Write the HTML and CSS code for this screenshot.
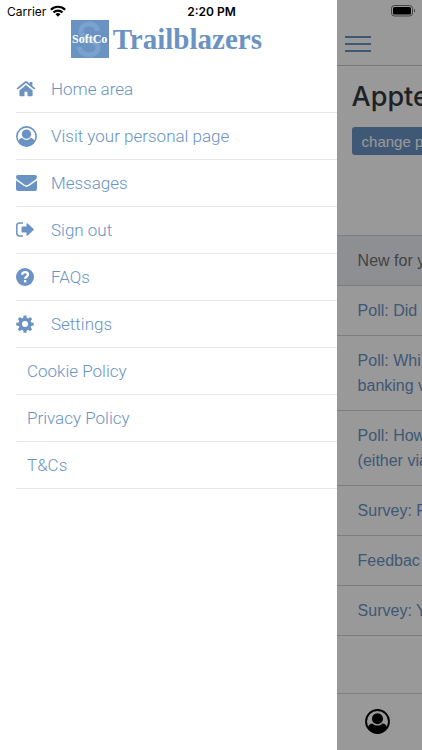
FILE: index.html
```html
<!DOCTYPE html>
<html lang="en">
<head>
<meta charset="utf-8">
<meta name="viewport" content="width=device-width, initial-scale=1">
<title>SoftCo Trailblazers</title>
<link rel="stylesheet" href="styles.css">
</head>
<body>
<svg class="defs" aria-hidden="true">
  <symbol id="person" viewBox="0 0 24 24">
    <circle cx="12" cy="12" r="11" fill="none" stroke="currentColor" stroke-width="1.800"/>
    <circle cx="12" cy="9.300" r="5.300" fill="currentColor"/>
    <path fill="currentColor" d="M7.200 13.800C8.600 15.200 10.200 15.900 12 15.900s3.400-.7 4.800-2.100c2.400.2 3.700 1.500 4.500 3.800A11 11 0 0 1 12 23a11 11 0 0 1-9.300-5.400c.8-2.300 2.100-3.600 4.500-3.800z"/>
  </symbol>
</svg>
<div class="app">
  <header class="status">
    <span class="carrier">Carrier
      <svg class="wifi" viewBox="0 0 16 12" aria-hidden="true"><g fill="none" stroke="#000" stroke-width="2.200"><path d="M.9 4.700a10 10 0 0 1 14.200 0"/><path d="M3.500 7.500a6.300 6.300 0 0 1 9 0"/></g><path d="M8 11.700 5.500 9.200a3.500 3.500 0 0 1 5 0z"/></svg>
    </span>
    <time class="clock">2:20 PM</time>
    <svg class="battery" viewBox="0 0 25 12" aria-hidden="true"><rect x=".5" y=".5" width="21" height="10.500" rx="3" fill="none" stroke="#444"/><rect x="2" y="2" width="18" height="7.500" rx="1.500"/><path d="M23 4v3.600c1.600-.6 1.600-3 0-3.600z" fill="#444"/></svg>
  </header>

  <nav class="drawer" aria-label="Main menu">
    <div class="brand">
      <span class="badge">
        <svg class="badge-art" viewBox="0 0 38 38" aria-hidden="true"><path d="M27 11c-1-5-5-7-9-7-5 0-8 3-8 7 0 9 17 8 17 17 0 4-4 7-9 7s-9-3-10-8" fill="none" stroke="#7ba1cd" stroke-width="5"/></svg>
        <span class="badge-name">SoftCo</span>
      </span>
      <span class="wordmark">Trailblazers</span>
    </div>
    <ul class="menu">
      <li><a href="#"><span class="icon"><svg width="20" height="20" viewBox="0 0 20 20"><path d="M10 6 3.400 11.400V16.500q0 .8.8.8H8.500V12.700h3V17.300h4.300q.8 0 .8-.8V11.400z"/><path d="M10 2.200q.7 0 1.200.4L13.700 4.700V3h2.700v3.900l2.600 2.200q.3.300.1.600l-.6.600q-.3.300-.6 0L10 3.900l-7.900 6.400q-.3.300-.6 0L.9 9.700q-.2-.3.100-.6l7.800-6.500q.5-.4 1.200-.4z"/></svg></span>Home area</a></li>
      <li><a href="#"><span class="icon"><svg width="21" height="21"><use href="#person"/></svg></span>Visit your personal page</a></li>
      <li><a href="#"><span class="icon"><svg width="21" height="16" viewBox="0 0 21 16"><path d="M2 0h17q2 0 2 2 0 1.500-1.700 2.800l-7 4.900q-1.800 1.200-3.600 0l-7-4.900Q0 3.500 0 2 0 0 2 0z"/><path d="M0 5.200q.5.500 1.200 1l6.500 4.500q2.800 2 5.600 0l6.500-4.500q.7-.5 1.200-1V14q0 2-2 2H2q-2 0-2-2z"/></svg></span>Messages</a></li>
      <li><a href="#"><span class="icon"><svg width="18" height="16" viewBox="0 0 18 16"><path d="M7 1H3.500Q.8 1 .8 3.700v7.600Q.8 14 3.500 14H7" fill="none" stroke="currentColor" stroke-width="1.500"/><path d="M10.700 1.400q.6-.3 1 .1l5.900 5.500q.5.500 0 1l-5.900 5.600q-.9.600-1.200-.4V10.500H6.300q-.8 0-.8-.8V5.300q0-.8.8-.8h4.200V1.900q0-.3.200-.5z"/></svg></span>Sign out</a></li>
      <li><a href="#"><span class="icon"><svg width="18" height="18" viewBox="0 0 18 18"><circle cx="9" cy="9" r="9"/><path d="M6 6.800C6.300 5 7.400 4.200 9.100 4.200c1.700 0 2.900 1 2.900 2.400 0 2.100-2.900 2.100-2.900 4.200" fill="none" stroke="#fff" stroke-width="2.300"/><path fill="#fff" d="M7.900 12h2.400v2.400H7.900z"/></svg></span>FAQs</a></li>
      <li><a href="#"><span class="icon"><svg width="18" height="18" viewBox="0 0 18 18"><path fill-rule="evenodd" d="M7.600.4h2.800l.4 2.400 1.400.6 2-1.400 2 2-1.500 2 .6 1.400 2.400.4v2.700l-2.400.4-.6 1.400 1.400 2-2 1.900-1.900-1.400-1.400.6-.4 2.300H7.600l-.4-2.300-1.400-.6-2 1.400-1.900-1.900 1.400-2-.6-1.400-2.400-.4V7.800l2.400-.4.6-1.400-1.400-2 2-2 1.900 1.400 1.400-.6zM9 6a3 3 0 1 0 0 6 3 3 0 0 0 0-6z"/></svg></span>Settings</a></li>
      <li><a class="plain" href="#">Cookie Policy</a></li>
      <li><a class="plain" href="#">Privacy Policy</a></li>
      <li><a class="plain" href="#">T&amp;Cs</a></li>
    </ul>
  </nav>

  <main class="page">
    <div class="topbar">
      <button class="burger" type="button" aria-label="Menu"><span></span><span></span><span></span></button>
    </div>
    <section class="intro">
      <h1>Appte</h1>
      <button class="change" type="button">change p</button>
    </section>
    <h2 class="list-title">New for y</h2>
    <ul class="feed">
      <li><a href="#">Poll: Did</a></li>
      <li><a href="#">Poll: Whi<br>banking v</a></li>
      <li><a href="#">Poll: How<br>(either via</a></li>
      <li><a href="#">Survey: F</a></li>
      <li><a href="#">Feedbac</a></li>
      <li><a href="#">Survey: Y</a></li>
    </ul>
    <footer class="tabs">
      <a href="#" aria-label="Profile"><svg width="25" height="25"><use href="#person"/></svg></a>
    </footer>
    <div class="shade"></div>
  </main>
</div>
</body>
</html>
```
FILE: styles.css
```css
:root {
  --blue: #6a93c4;
  --line: #e6e7e9;
}

* { box-sizing: border-box; }

body {
  margin: 0;
  background: #fff;
  font-family: Inter, "Liberation Sans", sans-serif;
}

ul { list-style: none; margin: 0; padding: 0; }
a { color: var(--blue); text-decoration: none; }
svg { display: block; fill: currentColor; }
.defs { position: absolute; width: 0; height: 0; }

.app {
  position: relative;
  display: flex;
  min-height: 100vh;
  overflow: hidden;
}

/* Status bar lies over the drawer and the page */
.status {
  position: absolute;
  z-index: 2;
  top: 0;
  left: 0;
  right: 0;
  display: grid;
  grid-template-columns: 1fr auto 1fr;
  align-items: center;
  height: 22px;
  padding: 0 6px 0 7px;
  font-size: 12px;
}
.carrier { display: flex; align-items: center; gap: 4px; }
.wifi { width: 16px; height: 12px; }
.clock { font-weight: 600; }
.battery { width: 25px; height: 12px; justify-self: end; }

.drawer { flex: 0 0 calc(80% - 1px); background: #fff; }

.brand {
  display: flex;
  justify-content: center;
  align-items: center;
  gap: 4px;
  height: 66px;
  padding-top: 12px;
  padding-right: 4px;
}
.badge {
  display: grid;
  place-items: center;
  width: 38px;
  height: 38px;
  background: var(--blue);
}
.badge-art, .badge-name { grid-area: 1 / 1; }
.badge-art { width: 38px; height: 38px; }
.badge-name {
  z-index: 1;
  color: #fff;
  font: bold 12px "Liberation Serif", serif;
}
.wordmark {
  color: var(--blue);
  font: bold 29px/38px "Liberation Serif", serif;
}

.menu { padding-left: 16px; }
.menu li { border-bottom: 1px solid var(--line); }
.menu a {
  display: flex;
  align-items: center;
  height: 46px;
  font-family: Roboto, "Liberation Sans", sans-serif;
  font-size: 17px;
  font-weight: 300;
}
.menu .icon { flex: none; width: 35px; }
.menu .plain { padding-left: 11px; }

.page {
  position: relative;
  flex: 1;
  min-width: 0;
  display: flex;
  flex-direction: column;
  overflow: hidden;
  white-space: nowrap;
  font-family: "Liberation Sans", sans-serif;
}
.shade {
  position: absolute;
  inset: 0;
  background: rgba(0, 0, 0, 0.4);
}

.topbar {
  height: 66px;
  padding: 36px 8px 0;
  border-bottom: 1px solid #c8cad2;
}
.burger {
  display: grid;
  gap: 5px;
  width: 26px;
  padding: 0;
  border: 0;
  background: none;
}
.burger span { height: 2px; background: var(--blue); }

.intro { height: 169px; padding: 14px 15px 0; }
.intro h1 {
  margin: 0 0 13px;
  color: #36383d;
  font-family: Inter, "Liberation Sans", sans-serif;
  font-size: 27px;
  font-weight: 500;
  line-height: 34px;
}
.change {
  height: 28px;
  padding: 0 10px;
  border: 0;
  border-radius: 3px;
  background: var(--blue);
  color: #fff;
  font: 15px "Liberation Sans", sans-serif;
}

.list-title {
  margin: 0;
  padding: 12px 21px;
  border: solid #d0d1d3;
  border-width: 1px 0;
  background: #eceff3;
  color: #6f7072;
  font-size: 16px;
  font-weight: normal;
  line-height: 25px;
}
.feed a {
  display: block;
  padding: 12px 21px;
  border-bottom: 1px solid #d0d1d3;
  font-size: 16px;
  line-height: 25px;
}

.tabs {
  margin-top: auto;
  height: 57px;
  padding: 15px 28px;
  border-top: 1px solid #d8d8d8;
}
.tabs a { color: #000; }
```
